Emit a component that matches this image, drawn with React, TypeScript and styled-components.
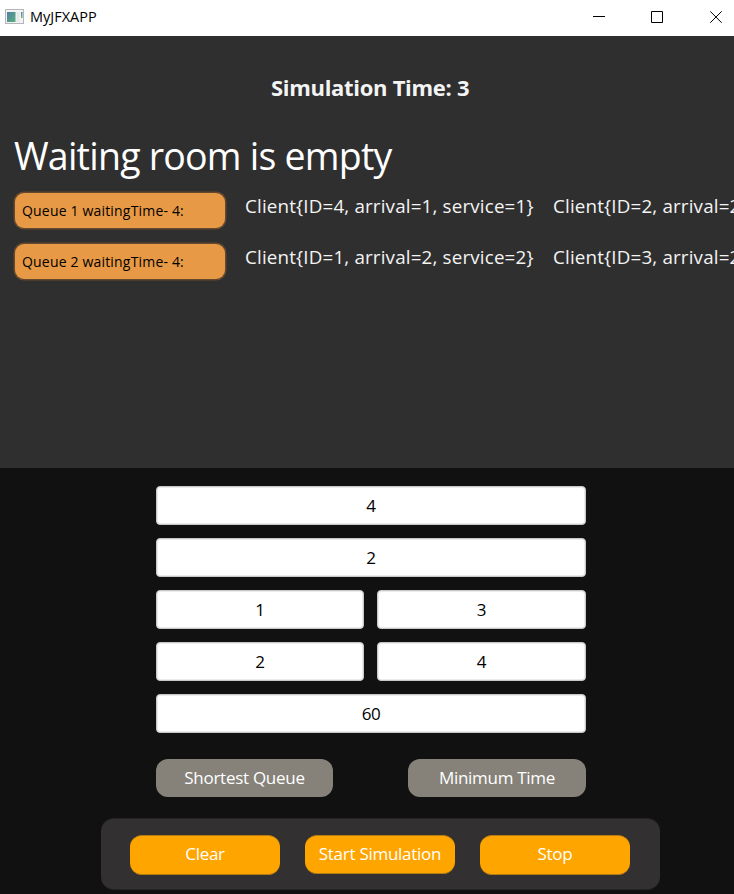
import React from "react";
import styled, { createGlobalStyle } from "styled-components";

const GlobalStyle = createGlobalStyle`
  * { box-sizing: border-box; }
  body {
    margin: 0;
    overflow: hidden;
    background: #111111;
    font-family: "Open Sans", "Noto Sans", sans-serif;
  }
`;

const Window = styled.div`
  width: 734px;
  height: 894px;
  display: flex;
  flex-direction: column;
  overflow: hidden;
  background: #111111;
`;

const TitleBar = styled.header`
  height: 36px;
  flex: none;
  display: flex;
  align-items: center;
  padding: 0 11px 2px 5px;
  background: #ffffff;
  color: #000000;
`;

const AppName = styled.span`
  flex: 1;
  margin-left: 5px;
  font-size: 14.5px;
  line-height: 20px;
  letter-spacing: 0;
`;

const WindowControls = styled.div`
  display: flex;
  gap: 46px;
`;

const Board = styled.main`
  height: 432px;
  flex: none;
  overflow: hidden;
  padding: 37px 0 0 14px;
  background: #2f2f2f;
  color: #f4f4f4;
`;

const Clock = styled.h1`
  margin: 0 0 0 257px;
  font-size: 22px;
  line-height: 28px;
  font-weight: 700;
  letter-spacing: -0.3px;
  white-space: nowrap;
`;

const RoomStatus = styled.p`
  margin: 30px 0 0;
  height: 61px;
  color: #ffffff;
  font-size: 37.5px;
  line-height: 50px;
  letter-spacing: -0.77px;
  white-space: nowrap;
`;

const QueueRow = styled.div`
  display: flex;
  height: 51px;
  white-space: nowrap;
`;

const QueueLabel = styled.div`
  width: 210px;
  height: 35px;
  flex: none;
  margin: 1px 20px 0 1px;
  padding-left: 7px;
  border-radius: 9px;
  background: #e89945;
  box-shadow: 0 0 0 1.5px #64492f;
  color: #000000;
  font-size: 14px;
  line-height: 35px;
  letter-spacing: 0.18px;
`;

const Client = styled.span`
  width: 308px;
  flex: none;
  font-size: 18.8px;
  line-height: 28px;
  letter-spacing: 0.17px;
`;

const Controls = styled.section`
  flex: 1;
  display: flex;
  flex-direction: column;
  padding-top: 18px;
  background: #111111;
`;

const Form = styled.div`
  width: 430px;
  margin-left: 156px;
  display: grid;
  grid-template-columns: 208px 209px;
  gap: 13px;
`;

const Field = styled.input<{ $wide?: boolean }>`
  grid-column: ${(p) => (p.$wide ? "1 / -1" : "auto")};
  width: 100%;
  min-width: 0;
  height: 39px;
  margin: 0;
  padding: 0 0 1px;
  border: 1px solid #c8c8c8;
  border-radius: 4px;
  outline: none;
  background: #ffffff;
  box-shadow: inset 0 0 0 1px #ececec;
  color: #000000;
  font-family: inherit;
  font-size: 17px;
  letter-spacing: -0.4px;
  text-align: center;
`;

const Strategies = styled.div`
  width: 430px;
  margin: 26px 0 0 156px;
  display: flex;
  justify-content: space-between;
`;

const Button = styled.button`
  border: 0;
  border-radius: 12px;
  color: #ffffff;
  font-family: inherit;
  font-size: 17px;
  white-space: nowrap;
`;

const StrategyButton = styled(Button)<{ $width: number }>`
  width: ${(p) => p.$width}px;
  height: 38px;
  padding: 0 0 1px;
  background: #86827a;
  letter-spacing: -0.28px;
`;

const ActionBar = styled.footer`
  width: 559px;
  height: 72px;
  margin: 21px 0 0 101px;
  padding: 16px 29px 0 28px;
  display: flex;
  justify-content: space-between;
  align-items: flex-start;
  border: solid #262525;
  border-width: 1px 0;
  padding: 16px 30px 0 29px;
  border-radius: 13px;
  background: #333031;
`;

const ActionButton = styled(Button)<{ $short?: boolean }>`
  width: 150px;
  height: ${(p) => (p.$short ? 39 : 40)}px;
  padding: 0 0 ${(p) => (p.$short ? 2 : 3)}px;
  border: solid #b47a14;
  border-width: 1px 0;
  background: #ffa500;
  letter-spacing: -0.27px;
`;

const queues = [
  { label: "Queue 1 waitingTime- 4:", clients: [[4, 1, 1], [2, 2, 2]] },
  { label: "Queue 2 waitingTime- 4:", clients: [[1, 2, 2], [3, 2, 3]] },
];

const fields = [
  { value: "4", wide: true },
  { value: "2", wide: true },
  { value: "1" },
  { value: "3" },
  { value: "2" },
  { value: "4" },
  { value: "60", wide: true },
];

function AppIcon() {
  return (
    <svg width="20" height="17" viewBox="0 0 20 17">
      <defs>
        <linearGradient id="screen" x1="0" y1="0" x2="1" y2="1">
          <stop offset="0" stopColor="#4e7fa6" />
          <stop offset="1" stopColor="#5cb07c" />
        </linearGradient>
        <linearGradient id="side" x1="0" y1="0" x2="0" y2="1">
          <stop offset="0" stopColor="#4c80b0" />
          <stop offset="1" stopColor="#71b978" />
        </linearGradient>
      </defs>
      <rect x="0.5" y="0.5" width="18" height="14" fill="#f3f3f3" stroke="#b3b7bc" />
      <rect x="2" y="3" width="8.5" height="10" fill="url(#screen)" />
      <rect x="11.5" y="3" width="3" height="10" fill="#e6e8ea" />
      <rect x="16" y="3" width="1.5" height="6" fill="url(#side)" />
    </svg>
  );
}

function ControlIcon({ d }: { d: string }) {
  return (
    <svg width="13" height="13" viewBox="0 0 13 13" fill="none" stroke="#000">
      <path d={d} />
    </svg>
  );
}

export default function App() {
  return (
    <>
      <GlobalStyle />
      <Window>
        <TitleBar>
          <AppIcon />
          <AppName>MyJFXAPP</AppName>
          <WindowControls>
            <ControlIcon d="M1 5.5h12" />
            <ControlIcon d="M0.5 0.5h11v11h-11z" />
            <ControlIcon d="M0.2 0.3l11.5 11.5M11.7 0.3l-11.5 11.5" />
          </WindowControls>
        </TitleBar>
        <Board>
          <Clock>Simulation Time: 3</Clock>
          <RoomStatus>Waiting room is empty</RoomStatus>
          {queues.map((queue) => (
            <QueueRow key={queue.label}>
              <QueueLabel>{queue.label}</QueueLabel>
              {queue.clients.map(([id, arrival, service]) => (
                <Client key={id}>{`Client{ID=${id}, arrival=${arrival}, service=${service}}`}</Client>
              ))}
            </QueueRow>
          ))}
        </Board>
        <Controls>
          <Form>
            {fields.map((field, i) => (
              <Field key={i} $wide={field.wide} defaultValue={field.value} />
            ))}
          </Form>
          <Strategies>
            <StrategyButton $width={177}>Shortest Queue</StrategyButton>
            <StrategyButton $width={178}>Minimum Time</StrategyButton>
          </Strategies>
          <ActionBar>
            <ActionButton>Clear</ActionButton>
            <ActionButton $short>Start Simulation</ActionButton>
            <ActionButton>Stop</ActionButton>
          </ActionBar>
        </Controls>
      </Window>
    </>
  );
}
